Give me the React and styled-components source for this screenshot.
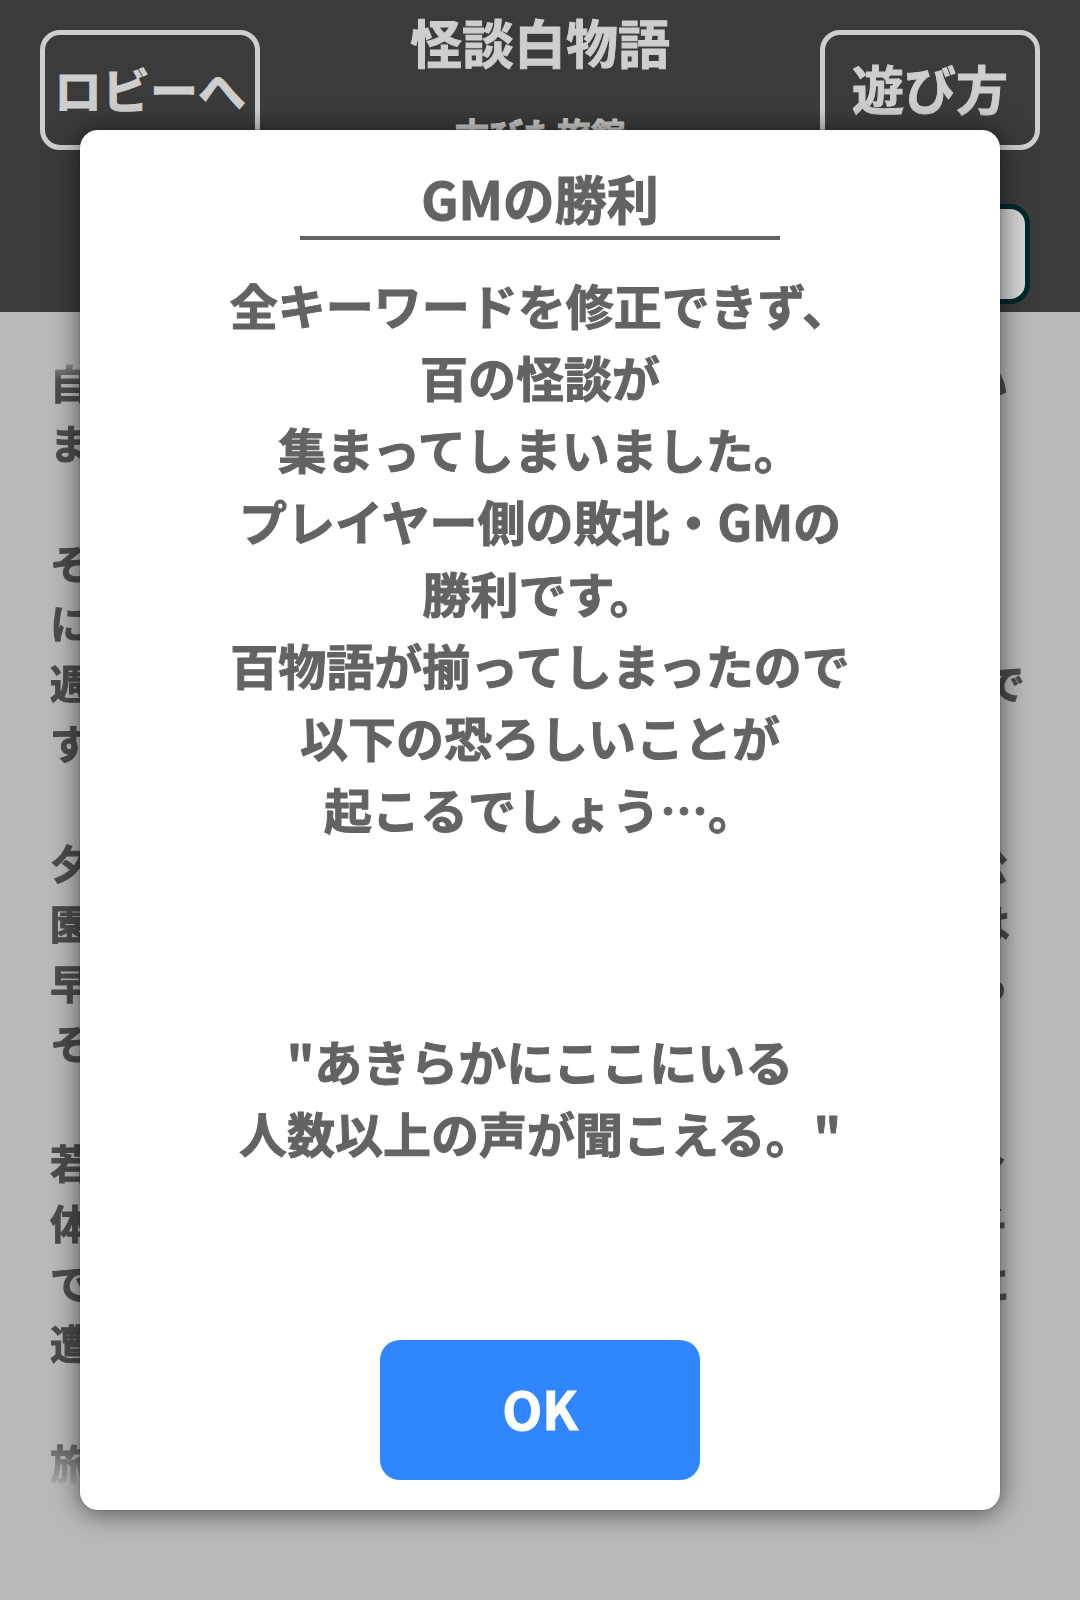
import React, { useState } from "react";
import styled, { createGlobalStyle } from "styled-components";

const GlobalStyle = createGlobalStyle`
  *, *::before, *::after { box-sizing: border-box; }
  body {
    margin: 0;
    background: #b9b9b9;
    font-family: "Noto Sans CJK JP", sans-serif;
    font-weight: 700;
    -webkit-text-stroke: 1px currentColor;
  }
  h1, h2, p { margin: 0; font-weight: inherit; }
  button { font: inherit; cursor: pointer; }
`;

const Page = styled.div`
  min-height: 100vh;
`;

const Header = styled.header`
  background: #3b3b3b;
  color: #cecece;
  padding: 0 40px 8px;
`;

const TopBar = styled.div`
  display: flex;
  justify-content: space-between;
  align-items: flex-start;
`;

const Heading = styled.div`
  display: flex;
  flex-direction: column;
  align-items: center;
  gap: 24px;
`;

const GameTitle = styled.h1`
  font-size: 52px;
  line-height: 84px;
`;

const StageName = styled.p`
  font-size: 34px;
  line-height: 52px;
`;

const OutlineButton = styled.button`
  width: 220px;
  height: 120px;
  margin-top: 30px;
  padding: 0 0 4px;
  border: 5px solid currentColor;
  border-radius: 20px;
  background: transparent;
  color: inherit;
  font-size: ${({ $compact }) => ($compact ? "48px" : "52px")};
  line-height: 80px;
  white-space: nowrap;
`;

const ToolRow = styled.div`
  display: flex;
  justify-content: flex-end;
  margin-top: 44px;
  padding-right: 10px;
`;

const MenuButton = styled.button`
  width: 200px;
  height: 100px;
  border: 5px solid #00292a;
  border-radius: 20px;
  background: #d4d4d4;
`;

const Story = styled.main`
  padding: 40px 50px;
  color: #4c4c4c;
  font-size: 40px;
  line-height: 60px;
  white-space: pre;
  overflow: hidden;
`;

const StoryText = styled.div`
  mask-image: linear-gradient(
    transparent,
    #000 30px,
    #000 calc(100% - 60px),
    transparent
  );
`;

const Backdrop = styled.div`
  position: fixed;
  inset: 0;
  display: flex;
  align-items: flex-start;
  padding: 130px 80px 90px;
`;

const Dialog = styled.section`
  flex: 1;
  display: flex;
  flex-direction: column;
  align-items: center;
  padding: 30px;
  border-radius: 18px;
  background: #fff;
  color: #636363;
  text-align: center;
  box-shadow: 0 0 2px rgba(0, 0, 0, 0.3), 0 2px 28px rgba(0, 0, 0, 0.6);
`;

const DialogTitle = styled.h2`
  width: 100%;
  max-width: 480px;
  border-bottom: 4px solid currentColor;
  font-size: 52px;
  line-height: 76px;
`;

const Message = styled.p`
  max-width: 640px;
  margin-top: 28px;
  font-size: 48px;
  line-height: 72px;
`;

const Omen = styled(Message)`
  margin-top: 180px;
`;

const OkButton = styled.button`
  width: 320px;
  height: 140px;
  margin-top: 172px;
  padding: 0 0 4px;
  border: 0;
  border-radius: 20px;
  background: #2f86ff;
  color: #fff;
  font-size: 52px;
  line-height: 80px;
`;

const story = [
  "自分たちは古びた旅館で一夜を明かすことになってい\nます。",
  "それは仕事の休みを使ってようやく実現した旅行、\nにぎやかな街を離れ、静かな山あいの古宿で過ごす、\n週末の小旅行!みんなで怪談を語り合うつもりなわけで\nす。",
  "夕方になって雨が降り出し、まわりに人の姿もない公\n園のそばを通り抜けて宿に着いた。奥山の日暮れとは\n早いもので窓の外はすっかり暗く、風の音もするから\nそんな夜です。",
  "若い女将の話によると、昔この宿に泊まった客が皆身\n体が重くなり、声も出せず、まるで本当に小さな迷子\nであるかのように廊下をさまよい、不思議な出来事に\n遭うそうです。",
  "旅館の夜は長い。",
];

export default function App() {
  const [open, setOpen] = useState(true);

  return (
    <>
      <GlobalStyle />
      <Page>
        <Header>
          <TopBar>
            <OutlineButton type="button" $compact>
              ロビーへ
            </OutlineButton>
            <Heading>
              <GameTitle>怪談白物語</GameTitle>
              <StageName>古びた旅館</StageName>
            </Heading>
            <OutlineButton type="button">遊び方</OutlineButton>
          </TopBar>
          <ToolRow>
            <MenuButton type="button" aria-label="メニュー" />
          </ToolRow>
        </Header>
        <Story>
          <StoryText>{story.join("\n\n")}</StoryText>
        </Story>
      </Page>
      {open && (
        <Backdrop>
          <Dialog role="dialog" aria-modal="true" aria-labelledby="result-title">
            <DialogTitle id="result-title">GMの勝利</DialogTitle>
            <Message>
              全キーワードを修正できず、
              <br />
              百の怪談が
              <br />
              集まってしまいました。
              <br />
              プレイヤー側の敗北・GMの勝利です。
              <br />
              百物語が揃ってしまったので
              <br />
              以下の恐ろしいことが
              <br />
              起こるでしょう…。
            </Message>
            <Omen>
              "あきらかにここにいる
              <br />
              人数以上の声が聞こえる。"
            </Omen>
            <OkButton type="button" onClick={() => setOpen(false)}>
              OK
            </OkButton>
          </Dialog>
        </Backdrop>
      )}
    </>
  );
}
